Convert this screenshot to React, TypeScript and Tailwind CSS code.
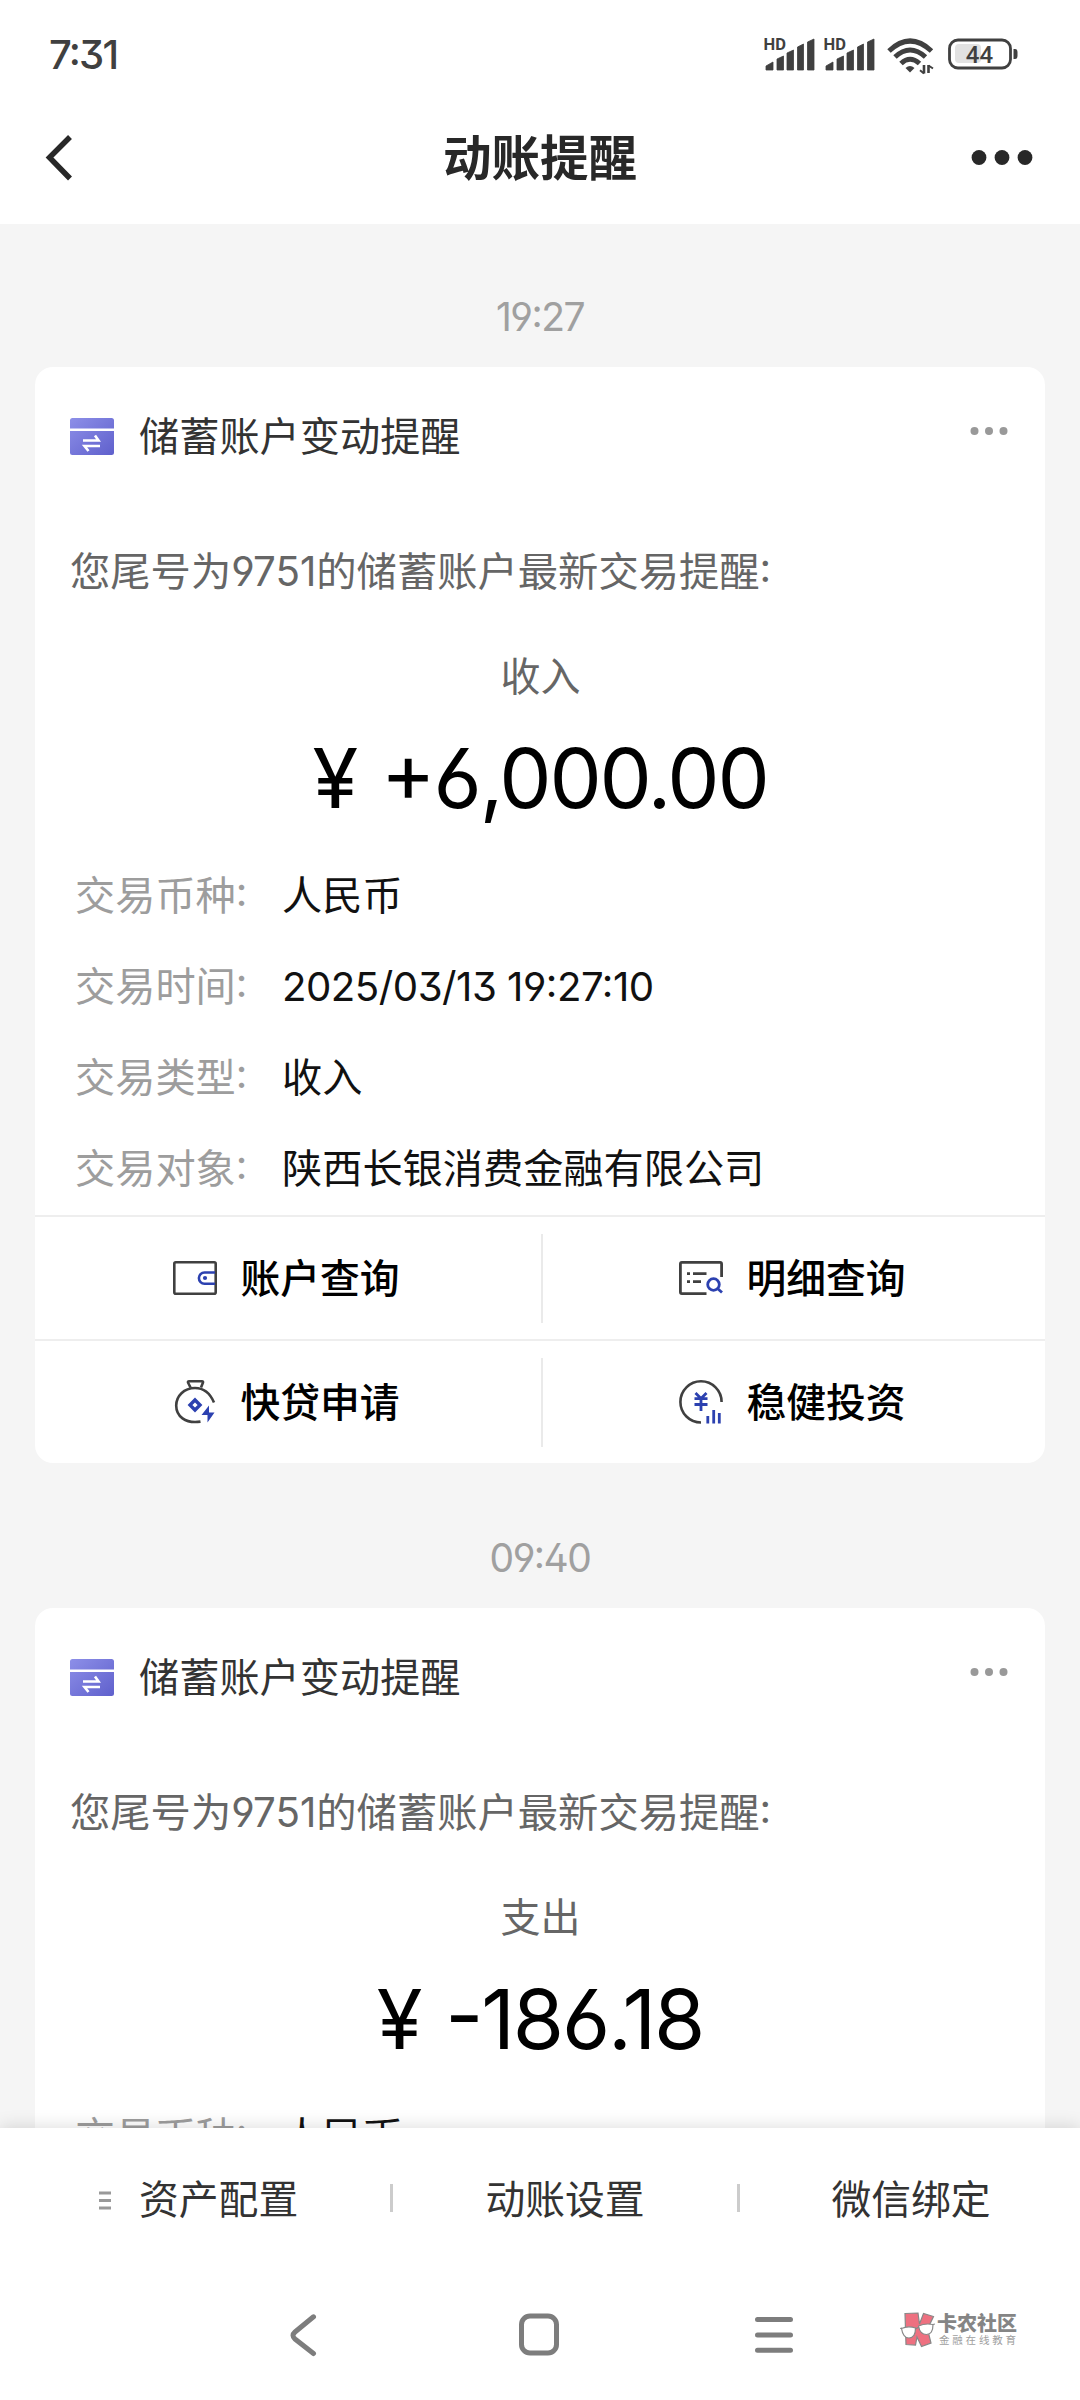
import React from 'react';

type Detail = { label: string; value: string; numeric?: boolean };

type Notice = {
  time: string;
  kind: string;
  amount: string;
  details: Detail[];
};

const notices: Notice[] = [
  {
    time: '19:27',
    kind: '收入',
    amount: '+6,000.00',
    details: [
      { label: '交易币种', value: '人民币' },
      { label: '交易时间', value: '2025/03/13 19:27:10', numeric: true },
      { label: '交易类型', value: '收入' },
      { label: '交易对象', value: '陕西长银消费金融有限公司' },
    ],
  },
  {
    time: '09:40',
    kind: '支出',
    amount: '-186.18',
    details: [{ label: '交易币种', value: '人民币' }],
  },
];

const actions = [
  { label: '账户查询', Icon: WalletIcon },
  { label: '明细查询', Icon: DetailIcon },
  { label: '快贷申请', Icon: LoanIcon },
  { label: '稳健投资', Icon: InvestIcon },
];

function Signal() {
  return (
    <svg className="-mt-2" width="52" height="44" viewBox="0 -8 52 44" fill="#404040">
      <text x="-0.5" y="13" fontSize="16.5" fontWeight="700" fontFamily="Roboto, sans-serif">HD</text>
      <path d="M2 33V29L9 25V33ZM13 33V22L19.5 19V33ZM23 33V16L29.5 13V33ZM33.5 33V10L39.5 7V33ZM43.5 33V5L50 2V33Z" stroke="#404040" strokeWidth="0.8" strokeLinejoin="round" />
    </svg>
  );
}

function Wifi() {
  return (
    <svg width="48" height="38" viewBox="0 0 48 38" fill="none" stroke="#404040" strokeWidth="5">
      <path d="M2 14Q23 -6 44.500 14" />
      <path d="M8 20Q23 6 38.500 20" />
      <path d="M14 26.500Q23 18 32.500 26.500" />
      <path d="M18.500 31Q23 27 27.500 31L23 35.500Z" fill="#404040" stroke="none" />
      <path d="M37 28V36.500M41.500 36V28" strokeWidth="2.600" />
      <path d="M33 33.200L37 36.500M41.500 28.500L46 31.500" strokeWidth="2" />
    </svg>
  );
}

function Battery() {
  return (
    <svg width="70" height="32" viewBox="0 0 70 32">
      <rect x="7" y="6" width="26" height="19" rx="4" fill="#e2e2e2" />
      <rect x="1.500" y="2" width="61" height="28" rx="8.500" fill="none" stroke="#404040" strokeWidth="2.800" />
      <path d="M65.500 11H67Q69.500 11 69.500 14V18Q69.500 21 67 21H65.500Z" fill="#404040" />
      <text x="31.500" y="24.500" fontSize="24" fontWeight="500" textAnchor="middle" fill="#404040" fontFamily="Roboto, sans-serif">44</text>
    </svg>
  );
}

function CardIcon() {
  return (
    <svg className="-mt-0.5" width="44" height="37" viewBox="0 0 44 37">
      <defs>
        <linearGradient id="cardFill" x1="0" y1="0" x2="1" y2="1">
          <stop offset="0" stopColor="#8d8fe8" />
          <stop offset="1" stopColor="#5f60cc" />
        </linearGradient>
      </defs>
      <path d="M2.500 0H41.500Q44 0 44 2.500V10.500H0V2.500Q0 0 2.500 0ZM0 13H44V34.500Q44 37 41.500 37H2.500Q0 37 0 34.500Z" fill="url(#cardFill)" />
      <path d="M13 22.500H28.500L25 17.500M30 28H14.500L18.500 33" fill="none" stroke="#fff" strokeWidth="2.600" />
    </svg>
  );
}

function WalletIcon() {
  return (
    <svg width="44" height="44" viewBox="0 0 44 44" fill="none" strokeWidth="2.600">
      <rect x="1.300" y="6.300" width="41.400" height="31.400" rx="1.500" stroke="#404040" />
      <path d="M42 16.500H31.500A5.600 5.600 0 0 0 31.500 27.700H42" stroke="#2c41b0" />
      <circle cx="32" cy="22" r="2.100" fill="#2c41b0" />
    </svg>
  );
}

function DetailIcon() {
  return (
    <svg width="44" height="44" viewBox="0 0 44 44" fill="none" stroke="#404040" strokeWidth="2.800">
      <path d="M27.500 37.600H2.900Q1.400 37.600 1.400 36.100V7.900Q1.400 6.400 2.900 6.400H41.100Q42.600 6.400 42.600 7.900V21" />
      <path d="M8 17.700H11M14 17.700H27.500M8 25.700H11M14 25.700H22" />
      <circle cx="34.500" cy="28.500" r="5.800" stroke="#2c41b0" />
      <path d="M38.500 32.500L43 36.500" stroke="#2c41b0" />
    </svg>
  );
}

function LoanIcon() {
  return (
    <svg width="44" height="44" viewBox="0 0 44 44" fill="none" stroke="#404040" strokeWidth="2.600" strokeLinejoin="round">
      <path d="M17.500 7.500L15 2.500Q14.700 1.300 16 1.300H29Q30.300 1.300 30 2.500L28 7.500" />
      <path d="M41 22.500C37 13 30 8 22 8C11 8 3.200 16 3.200 25.500C3.200 36 12 44 27.500 41.600" />
      <path d="M22 20L27 25L22 30L17 25Z" stroke="#2c41b0" strokeWidth="3.400" strokeLinejoin="miter" />
      <path d="M36 25.500L28.500 35H34.500V42.500L41.500 32.500H36Z" fill="#2c41b0" stroke="none" />
    </svg>
  );
}

function InvestIcon() {
  return (
    <svg width="44" height="44" viewBox="0 0 44 44" fill="none" stroke="#2c41b0" strokeWidth="2.800">
      <path d="M22 42.500A20.600 20.600 0 1 1 42.600 21.900" stroke="#404040" strokeWidth="2.600" />
      <path d="M16.500 13L22 18.500L27.500 13M15.500 18.700H28.500M15.500 24.500H28.500M22 18.500V31" />
      <path d="M28.800 36V43.500M34.700 30V43.500M40.300 33V43.500" />
    </svg>
  );
}

function StatusBar() {
  return (
    <div className="flex h-[92px] items-start justify-between pl-[49px] pr-[62px] pt-[37px]">
      <span className="mt-[-3px] text-[40px] font-medium leading-[42px] tracking-[-1.8px] text-[#404040]">7:31</span>
      <div className="flex">
        <div className="mr-2"><Signal /></div>
        <div className="mr-[11px]"><Signal /></div>
        <div className="mr-[13px]"><Wifi /></div>
        <div className="pt-px"><Battery /></div>
      </div>
    </div>
  );
}

function Header() {
  return (
    <header className="h-[224px] shrink-0 bg-white">
      <StatusBar />
      <div className="flex h-[132px] items-center justify-between pl-[45px] pr-[47px]">
        <svg width="62" height="46" viewBox="0 0 62 46" fill="none" stroke="#282828" strokeWidth="5.500">
          <path d="M25 2L4.500 22.500L25 43.500" />
        </svg>
        <h1 className="pl-0.5 pt-0.5 text-[48.5px] font-bold leading-[60px] text-[#282828]">动账提醒</h1>
        <svg width="62" height="16" viewBox="0 0 62 16" fill="#282828">
          <circle cx="8" cy="7.500" r="7.400" />
          <circle cx="31" cy="7.500" r="7.400" />
          <circle cx="54" cy="7.500" r="7.400" />
        </svg>
      </div>
    </header>
  );
}

function NoticeCard({ notice }: { notice: Notice }) {
  return (
    <section className="mx-[35px] rounded-[18px] bg-white">
      <div className="flex h-[140px] items-center pl-[35px] pr-[37px]">
        <CardIcon />
        <h2 className="ml-[25px] flex-1 text-[40.2px] text-[#333]">储蓄账户变动提醒</h2>
        <svg className="-mt-3" width="38" height="10" viewBox="0 0 38 10" fill="#999">
          <circle cx="4.500" cy="5" r="4" />
          <circle cx="19" cy="5" r="4" />
          <circle cx="33.500" cy="5" r="4" />
        </svg>
      </div>
      <p className="flex h-[130px] items-center whitespace-nowrap pl-[35px] pt-px text-[40.3px] text-[#666]">
        您尾号为<span>9751</span>的储蓄账户最新交易提醒:
      </p>
      <p className="flex h-[78px] items-center justify-center pl-px pt-px text-[40px] text-[#666]">{notice.kind}</p>
      <p className="flex h-[124px] items-center justify-center pt-0.5 text-[83px] tracking-[-2.2px] text-black">
        <span className="mr-[25px]">¥</span>
        {notice.amount}
      </p>
      <div className="pt-3">
        {notice.details.map((d) => (
          <div key={d.label} className="flex h-[91px] items-center pl-[40px] text-[40.2px]">
            <span className="w-[207px] text-[#9d9d9d]">{d.label}:</span>
            <span className={d.numeric ? 'tracking-[-0.5px] text-[#111]' : 'text-[#111]'}>{d.value}</span>
          </div>
        ))}
      </div>
      <div className="grid grid-cols-[508px_1fr]">
        {actions.map(({ label, Icon }, i) => (
          <div key={label} className="flex h-[124px] items-center border-t-2 border-[#eee]">
            <div className="flex flex-1 items-center justify-center gap-[23px] pr-[3px] text-[39.8px] font-medium text-black">
              <Icon />
              <span className="pt-0.5">{label}</span>
            </div>
            {i % 2 === 0 && <div className="h-[89px] w-0.5 bg-[#eaeaea]" />}
          </div>
        ))}
      </div>
    </section>
  );
}

function BottomMenu() {
  return (
    <div className="flex h-[140px] items-center text-[39.8px] text-[#333]">
      <div className="flex w-[390px] items-center pl-[99px]">
        <svg className="mr-7 mt-1" width="12" height="19" viewBox="0 0 12 19" stroke="#999" strokeWidth="2.800">
          <path d="M0 2H12M0 9.500H12M0 17H12" />
        </svg>
        <span className="pt-1">资产配置</span>
      </div>
      <div className="h-7 w-[3px] bg-[#ccc]" />
      <div className="flex w-[344px] justify-center pt-1">动账设置</div>
      <div className="h-7 w-[3px] bg-[#ccc]" />
      <div className="flex flex-1 justify-center pl-0.5 pt-1">微信绑定</div>
    </div>
  );
}

function Brand() {
  return (
    <div className="flex">
      <svg width="35" height="36" viewBox="0 0 35 36" stroke="#888" strokeWidth="1.200">
        <path d="M5 1.500L18 1L19.500 12L23.500 1.500L33.500 4.500L27.500 17L31 31L21.500 34.500L17 25L15.500 33L6 32.500Z" fill="#ee7080" />
        <path d="M1.500 16.500Q8 13.500 15.500 16Q15.500 26 9 26Q3 26 1.500 16.500ZM18.500 14Q25 11 33 12.500Q33 22.500 26.500 22.500Q20 22.500 18.500 14Z" fill="#fff" />
        <path d="M0 16.500L2 16M15.500 17L19 15M33 12.500L35 12" />
      </svg>
      <div className="ml-[2px] flex flex-col pt-0.5">
        <span className="text-[20px] font-black leading-[21px] text-[#858585]">卡农社区</span>
        <span className="ml-[2px] text-[10.5px] leading-[12px] tracking-[2.8px] text-[#a0a0a0]">金融在线教育</span>
      </div>
    </div>
  );
}

function SystemNav() {
  return (
    <div className="flex h-[132px] items-start pl-[290px] pt-[44px]">
      <svg className="mt-[2px]" width="27" height="44" viewBox="0 0 27 44" fill="none" stroke="#7d7d7d" strokeWidth="5" strokeLinecap="round">
        <path d="M23.500 2.800L5 18Q1 21.500 5 25L23.500 39.500" />
      </svg>
      <svg className="ml-[201px] mt-px" width="42" height="44" viewBox="0 0 42 44" fill="none" stroke="#7d7d7d" strokeWidth="5">
        <rect x="3.500" y="3" width="35" height="37" rx="8.500" />
      </svg>
      <svg className="ml-[195px]" width="38" height="44" viewBox="0 0 38 44" stroke="#7d7d7d" strokeWidth="5" strokeLinecap="round">
        <path d="M2.500 7.500H35.500M2.500 23H35.500M2.500 38.300H35.500" />
      </svg>
      <div className="ml-[107px]">
        <Brand />
      </div>
    </div>
  );
}

export default function App() {
  return (
    <div className="flex h-[2400px] w-[1080px] flex-col overflow-hidden bg-[#f5f5f5] font-['Inter','Noto_Sans_CJK_SC',sans-serif] [font-feature-settings:'ss01','cv09','case']">
      <Header />
      <main className="h-[1904px] shrink-0 overflow-hidden">
        {notices.map((n, i) => (
          <div key={n.time}>
            <div className={i === 0 ? 'flex h-[143px] items-center justify-center pt-[44px]' : 'flex h-[145px] items-center justify-center pt-[46px]'}>
              <time className="text-[39px] tracking-[-1.5px] text-[#a0a0a0]">{n.time}</time>
            </div>
            <NoticeCard notice={n} />
          </div>
        ))}
      </main>
      <footer className="relative h-[272px] shrink-0 bg-white shadow-[0_-2px_16px_rgba(0,0,0,0.13)]">
        <BottomMenu />
        <SystemNav />
      </footer>
    </div>
  );
}
